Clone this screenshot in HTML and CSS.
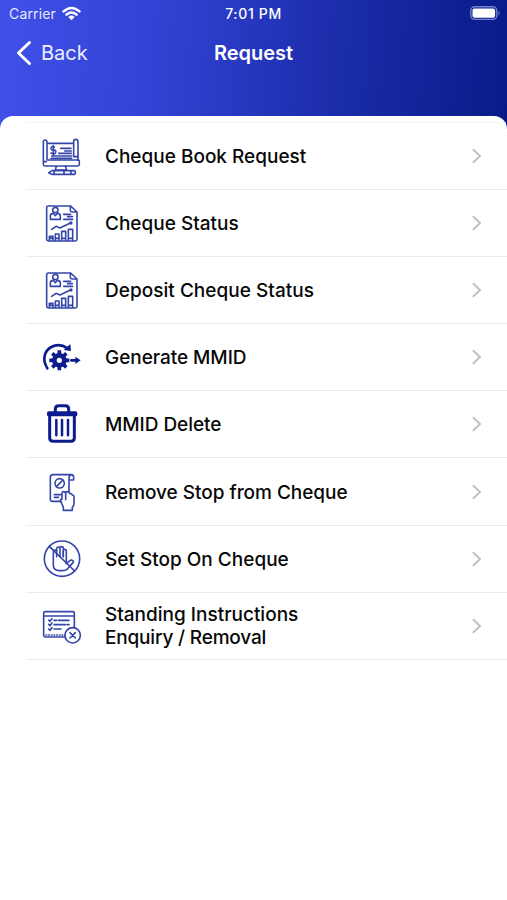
FILE: index.html
```html
<!DOCTYPE html>
<html lang="en">
<head>
<meta charset="utf-8">
<title>Request</title>
<link rel="stylesheet" href="styles.css">
</head>
<body>
<svg class="defs" width="0" height="0" aria-hidden="true">
  <symbol id="chevron" viewBox="0 0 12 18"><path d="M2.500 2.700 9 9l-6.500 6.300"/></symbol>
  <symbol id="status" viewBox="0 0 150 150">
    <path d="M104 24H37q-5 0-5 5v95q0 5 5 5h81q5 0 5-5V42zM103 25v12q0 5 5 5h14"/>
    <circle cx="58" cy="36" r="8"/>
    <path d="M43 64V54q0-7 9-8l6 7 6-7q9 1 9 8v10zM83 49h21M83 64h27M95 56h14M47 94l13-9 12 5 31-15"/>
    <circle cx="105" cy="75" r="2.5"/>
    <path d="M40 127v-12h11v12M58 127v-19h11v19M77 127v-27h12v27M97 127V94h13v33M40 121h11M58 121h11M77 121h12M97 121h13"/>
  </symbol>
</svg>
<div class="screen">
  <header class="header">
    <div class="status-bar">
      <div class="carrier"><span>Carrier</span>
        <svg class="wifi" viewBox="0 0 18 14"><path d="M1.5 5q7.500-6.500 15 0M4.300 8q4.700-4 9.400 0"/><path class="dot" d="M6 10.300q3-2.600 6 0L9 13.400z"/></svg>
      </div>
      <div class="time">7:01 PM</div>
      <div class="power"><svg class="battery" viewBox="0 0 31 15"><rect class="shell" x=".8" y=".8" width="26" height="12.600" rx="4"/><rect class="charge" x="2.500" y="2.500" width="22.600" height="9.200" rx="2"/><path class="cap" d="M28.500 5q2.500 2 0 4.500z"/></svg></div>
    </div>
    <nav class="nav-bar">
      <div class="back"><svg viewBox="0 0 16 26"><path d="M13.500 2.500 2.500 13l11 10.500"/></svg><span>Back</span></div>
      <h1>Request</h1>
      <div></div>
    </nav>
  </header>
  <main class="sheet">
    <ul class="menu">
      <li><svg class="icon" viewBox="0 0 150 150">
        <path d="M31 92h-6q-3 0-3-3V31q0-4 5-4t6 5v55h94q3 0 3 4v9q0 5-5 5H27q-5 0-5-5v-9M33 37h80M113 77V31q0-6 6-6t7 6v57M113 77h12M61 105l-3 12h34l-4-12"/>
        <path d="M74 52h31M86 60h20M68 67h38M47 75h60M45 82h62M55 49q-10-5-10 2t8 6 6 7-14 2M52 44v27"/>
        <path d="M38 125l10-6h65q5 0 5 6t-5 5H48zM54 120v10M84 120v10M105 120v10"/>
      </svg><span>Cheque Book Request</span><svg class="arrow"><use href="#chevron"/></svg></li>
      <li><svg class="icon"><use href="#status"/></svg><span>Cheque Status</span><svg class="arrow"><use href="#chevron"/></svg></li>
      <li><svg class="icon"><use href="#status"/></svg><span class="deposit">Deposit Cheque Status</span><svg class="arrow"><use href="#chevron"/></svg></li>
      <li><svg class="icon solid" viewBox="0 0 150 150">
        <path class="ring" d="M34 109C17 82 26 56 46 45q24-13 49 4"/>
        <path class="fill" d="M103 36l2 21-22-3zM118 74l16 11-16 11z"/>
        <path class="shaft" d="M106 85h15"/>
        <circle class="gear" cx="70" cy="85" r="15"/>
        <path class="teeth" d="M70 55v12M70 103v12M40 85h12M88 85h12M49 64l8 8M83 98l8 8M91 64l-8 8M57 98l-8 8"/>
      </svg><span class="generate">Generate MMID</span><svg class="arrow"><use href="#chevron"/></svg></li>
      <li><svg class="icon trash" viewBox="0 0 150 150">
        <path d="M58 39v-9q0-10 10-10h20q10 0 10 10v9"/><rect class="fill" x="33" y="37" width="91" height="15" rx="5"/>
        <path d="M41 50v67q0 10 10 10h54q10 0 10-10V50"/><path class="bars" d="M61 63v46M78 63v46M96 63v46"/>
      </svg><span class="delete">MMID Delete</span><svg class="arrow"><use href="#chevron"/></svg></li>
      <li><svg class="icon" viewBox="0 0 150 150">
        <path d="M75 103H49q-6 0-6-6V31q0-8 8-8h54q8 0 8 8v8H99M99 75V34q0-9 6-11"/>
        <circle cx="71" cy="49" r="14"/><path d="M81 39 61 59M55 83h20M55 91h13"/>
        <path d="M82 130v-9q-4-10-8-18-2-8 4-6V79q0-5 5-5t6 5v19-19q1-5 6-5t6 6q6-2 8 4 5 0 5 6v20q0 6-5 11v9z"/>
      </svg><span class="remove">Remove Stop from Cheque</span><svg class="arrow"><use href="#chevron"/></svg></li>
      <li><svg class="icon" viewBox="0 0 150 150">
        <circle cx="78" cy="74" r="53"/><path d="M40 37l76 74"/>
        <path d="M52 54v39q0 16 18 17h9q13 0 19-10l13-14q3-5-2-7-4-2-9 2l-9 8V51q0-5-5-5t-5 5v16M52 54q0-6 5-6t5 6v14M62 58V44q0-5 5-5t5 5v24M72 66V43q0-5 5-5t5 5v26"/>
      </svg><span>Set Stop On Cheque</span><svg class="arrow"><use href="#chevron"/></svg></li>
      <li><svg class="icon" viewBox="0 0 150 150">
        <path d="M87 108H28q-5 0-5-5V37q0-5 5-5h82q5 0 5 5v43M23 45h92"/>
        <path d="M38 57l4 4 6-8M38 70l4 4 6-8M38 84l4 4 6-8M54 58h8M67 58h32M54 71h35M94 71h5M54 84h21"/><path class="dashes" d="M30 102h57"/>
        <circle class="badge" cx="110" cy="103" r="23"/><path d="M102 95l16 16M118 95l-16 16"/>
      </svg><span>Standing Instructions<br><em>Enquiry / Removal</em></span><svg class="arrow"><use href="#chevron"/></svg></li>
    </ul>
  </main>
</div>
</body>
</html>
```
FILE: styles.css
```css
* { box-sizing: border-box; }
body { margin: 0; background: #fff; font-family: Inter, "Liberation Sans", sans-serif; color: #080808; }
.defs { display: block; }
svg { fill: none; stroke-linecap: round; stroke-linejoin: round; }
.screen { height: 900px; overflow: hidden; }
.header { height: 130px; color: #fff; background: linear-gradient(94deg, #4050e9 0%, #3142d3 32%, #1c2eac 64%, #071b88 100%); }
.status-bar { height: 27px; display: grid; grid-template-columns: 1fr auto 1fr; align-items: center; padding: 0 7px 0 9px; font-size: 14px; }
.carrier { display: flex; align-items: center; gap: 6px; color: #e5e8ff; letter-spacing: .15px; }
.wifi { width: 19px; height: 15px; stroke: #fff; stroke-width: 2.4; }
.wifi .dot { fill: #fff; stroke: none; }
.time { font-size: 14px; font-weight: 500; letter-spacing: .65px; margin-right: 2px; }
.power { display: flex; justify-content: flex-end; }
.battery { width: 31px; height: 15px; margin-right: -1px; }
.shell { stroke: #7581cf; stroke-width: 1.400; }
.charge { fill: #fff; }
.cap { fill: #7581cf; }
.nav-bar { height: 51px; display: grid; grid-template-columns: 1fr auto 1fr; align-items: center; padding: 0 16px; }
.back { display: flex; align-items: center; gap: 9px; font-size: 20px; color: #edf0ff; }
.back svg { width: 16px; height: 26px; stroke: #fff; stroke-width: 3; }
h1 { margin: 0; font-size: 20px; font-weight: 600; }
.sheet { margin-top: -14.500px; height: 785px; padding-top: 6px; background: #fff; border-radius: 13px 13px 0 0; overflow: hidden; position: relative; }
.menu { list-style: none; margin: 0 0 0 26px; padding: 0; border-top: 1px solid #f4f4f4; }
.menu li { height: 67.190px; display: flex; align-items: center; border-bottom: 1.500px solid #ebebeb; padding: 0 24px 0 10px; font-size: 19px; line-height: 23px; font-weight: 500; }
.menu span { flex: 1; margin-left: 19px; padding-top: 1px; white-space: nowrap; }
.menu em { font-style: normal; letter-spacing: -.18px; }
.deposit { letter-spacing: .03px; }
.generate, .delete { letter-spacing: -.05px; }
.remove { letter-spacing: -.03px; }
.icon { width: 50px; height: 50px; flex: none; stroke: #3445a9; stroke-width: 4.800; }
.icon.solid, .icon.trash { stroke: #0b1c8c; }
.icon .fill { fill: #0b1c8c; }
.solid .ring { stroke-width: 8; }
.solid .fill, .trash .fill { stroke: none; }
.solid .shaft { stroke-width: 8; }
.solid .gear { stroke-width: 14; }
.solid .teeth { stroke-width: 11; stroke-linecap: butt; }
.icon.trash { stroke-width: 9; }
.trash .bars { stroke-width: 7.500; }
.dashes { stroke-dasharray: 2 6; }
.badge { fill: #fff; }
.arrow { width: 12px; height: 18px; flex: none; stroke: #c1c1c4; stroke-width: 2; }
```
